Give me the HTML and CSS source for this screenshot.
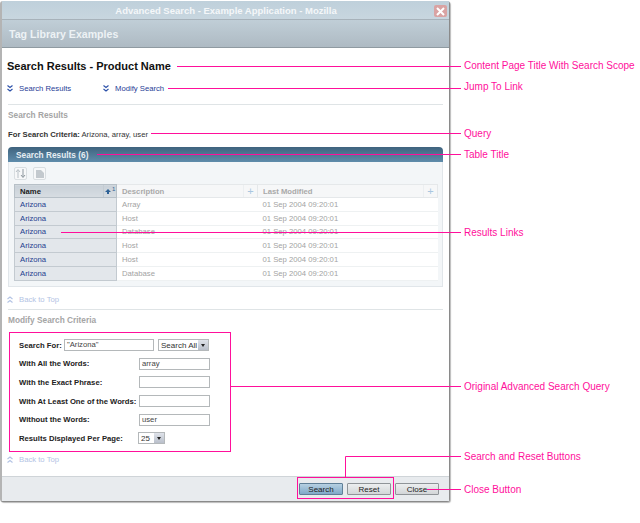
FILE: index.html
```html
<!DOCTYPE html>
<html lang="en">
<head>
  <meta charset="UTF-8" />
  <title>Advanced Search - Example Application - Mozilla</title>
  <link rel="stylesheet" href="styles.css">
</head>
<body>
  <div class="window">
    <div class="titlebar">
      <span class="titlebar-text">Advanced Search - Example Application - Mozilla</span>
      <span class="close-x">
        <svg width="9" height="9" viewBox="0 0 9 9"><path d="M1 1L8 8M8 1L1 8" stroke="#fff" stroke-width="2"/></svg>
      </span>
    </div>
    <div class="masthead">Tag Library Examples</div>

    <div class="content">
      <h1>Search Results - Product Name</h1>

      <div class="jump-links">
        <a class="jump" href="#results">
          <svg class="chev" width="6" height="7" viewBox="0 0 6 7"><path d="M.5 .5L3 2.500L5.500 .5M.5 4L3 6L5.500 4" fill="none" stroke="#2a4fa8" stroke-width="1.100"/></svg>
          Search Results
        </a>
        <a class="jump" href="#modify">
          <svg class="chev" width="6" height="7" viewBox="0 0 6 7"><path d="M.5 .5L3 2.500L5.500 .5M.5 4L3 6L5.500 4" fill="none" stroke="#2a4fa8" stroke-width="1.100"/></svg>
          Modify Search
        </a>
      </div>

      <div class="section-head rule" id="results">Search Results</div>
      <p class="criteria"><strong>For Search Criteria:</strong> Arizona, array, user</p>

      <div class="panel">
        <div class="panel-title">Search Results (6)</div>
        <div class="panel-body">
          <div class="toolbar">
            <span class="tool">
              <svg width="11" height="11" viewBox="0 0 11 11"><path d="M3 10V2M1 4L3 1.500L5 4" fill="none" stroke="#b9c1c7"/><path d="M8 1V9M6 7L8 9.500L10 7" fill="none" stroke="#8d979e"/></svg>
            </span>
            <span class="tool">
              <svg width="10" height="10" viewBox="0 0 10 10"><path d="M1 1H6L9 4V9H1Z" fill="#c3c9ce"/></svg>
            </span>
          </div>
          <table class="results">
            <thead>
              <tr>
                <th class="col-name">
                  <span class="th-inner">Name
                    <span class="sort">
                      <svg width="6" height="5" viewBox="0 0 6 5"><path d="M3 0L6 3H4V5H2V3H0Z" fill="#2f6296"/></svg><sup>1</sup>
                    </span>
                  </span>
                </th>
                <th><span class="th-inner">Description <span class="plus">+</span></span></th>
                <th><span class="th-inner">Last Modified <span class="plus">+</span></span></th>
              </tr>
            </thead>
            <tbody>
              <tr><td class="col-name"><a href="#">Arizona</a></td><td>Array</td><td>01 Sep 2004 09:20:01</td></tr>
              <tr><td class="col-name"><a href="#">Arizona</a></td><td>Host</td><td>01 Sep 2004 09:20:01</td></tr>
              <tr><td class="col-name"><a href="#">Arizona</a></td><td>Database</td><td>01 Sep 2004 09:20:01</td></tr>
              <tr><td class="col-name"><a href="#">Arizona</a></td><td>Host</td><td>01 Sep 2004 09:20:01</td></tr>
              <tr><td class="col-name"><a href="#">Arizona</a></td><td>Host</td><td>01 Sep 2004 09:20:01</td></tr>
              <tr><td class="col-name"><a href="#">Arizona</a></td><td>Database</td><td>01 Sep 2004 09:20:01</td></tr>
            </tbody>
          </table>
        </div>
      </div>

      <a class="back-top" href="#">
        <svg class="chev" width="6" height="7" viewBox="0 0 6 7"><path d="M.5 3L3 1L5.500 3M.5 6.500L3 4.500L5.500 6.500" fill="none" stroke="#b3c3e4" stroke-width="1.100"/></svg>
        Back to Top
      </a>

      <div class="section-head rule modify-head" id="modify">Modify Search Criteria</div>

      <form class="query">
        <div class="query-first">
          <label>Search For:</label>
          <span class="field wide">"Arizona"</span>
          <span class="dropdown scope">Search All<i class="drop-btn"></i></span>
        </div>
        <div class="query-row">
          <label>With All the Words:</label>
          <span class="field">array</span>
        </div>
        <div class="query-row">
          <label>With the Exact Phrase:</label>
          <span class="field"></span>
        </div>
        <div class="query-row">
          <label>With At Least One of the Words:</label>
          <span class="field"></span>
        </div>
        <div class="query-row">
          <label>Without the Words:</label>
          <span class="field">user</span>
        </div>
        <div class="query-row">
          <label>Results Displayed Per Page:</label>
          <span class="dropdown per-page">25<i class="drop-btn"></i></span>
        </div>
      </form>

      <a class="back-top last" href="#">
        <svg class="chev" width="6" height="7" viewBox="0 0 6 7"><path d="M.5 3L3 1L5.500 3M.5 6.500L3 4.500L5.500 6.500" fill="none" stroke="#b3c3e4" stroke-width="1.100"/></svg>
        Back to Top
      </a>
    </div>

    <div class="footer">
      <button class="btn primary" type="button">Search</button>
      <button class="btn" type="button">Reset</button>
      <button class="btn" type="button">Close</button>
    </div>
  </div>

  <svg class="callouts" width="640" height="523" viewBox="0 0 640 523">
    <g fill="none" stroke="#ff0f9b" stroke-width="1">
      <path d="M177 66.500H461"/>
      <path d="M168 88.500H461"/>
      <path d="M151 133.500H461"/>
      <path d="M97 154.500H461"/>
      <path d="M61 232.500H461"/>
      <rect x="9.500" y="332.500" width="221" height="119"/>
      <path d="M231 386.500H461"/>
      <rect x="297.500" y="477.500" width="96" height="21"/>
      <path d="M345.500 477V456.500H461"/>
      <path d="M427 489.500H461"/>
    </g>
  </svg>
  <span class="callout c-title">Content Page Title With Search Scope</span>
  <span class="callout c-jump">Jump To Link</span>
  <span class="callout c-query">Query</span>
  <span class="callout c-table">Table Title</span>
  <span class="callout c-links">Results Links</span>
  <span class="callout c-original">Original Advanced Search Query</span>
  <span class="callout c-buttons">Search and Reset Buttons</span>
  <span class="callout c-close">Close Button</span>
</body>
</html>
```

FILE: styles.css
```css
body {
  margin: 0;
  width: 640px;
  height: 523px;
  overflow: hidden;
  position: relative;
  background: #fff;
  font-family: "Liberation Sans", Arial, sans-serif;
  font-size: 7.700px;
  color: #222;
}
a {
  text-decoration: none;
}
.window {
  margin: 1px 0 0 0;
  width: 450px;
  height: 501px;
  display: flex;
  flex-direction: column;
  border-left: 2px solid #b4b4b4;
  border-right: 1px solid #8a8a8a;
  border-bottom: 1px solid #8a8a8a;
  border-radius: 3px;
  box-shadow: 1px 1px 1px #bbb;
  box-sizing: border-box;
  background: #fff;
}
.titlebar {
  height: 18px;
  flex: none;
  display: flex;
  align-items: center;
  justify-content: center;
  position: relative;
  background: linear-gradient(#bfd0db, #c8d6df);
  border-bottom: 1px solid #a7b2ba;
  color: #f4f7f9;
  font-size: 9.500px;
  font-weight: bold;
}
.titlebar-text {
  margin-left: 1px;
}
.close-x {
  position: absolute;
  right: 2px;
  top: 4px;
  width: 13px;
  height: 12px;
  display: flex;
  align-items: center;
  justify-content: center;
  background: #d9a3a3;
  border-radius: 2px;
}
.masthead {
  height: 27px;
  flex: none;
  display: flex;
  align-items: center;
  padding-left: 7px;
  background: linear-gradient(#c0ced7, #aebac3);
  border-bottom: 1px solid #8f9aa1;
  color: #edf2f5;
  font-size: 10.600px;
  font-weight: bold;
}
.content {
  flex: 1;
  padding: 0 6px;
}
h1 {
  margin: 11px 0 0 -1px;
  font-size: 11px;
  line-height: 14px;
  color: #111;
}
.jump-links {
  display: flex;
  margin: 9px 0 0 -1px;
  height: 12px;
  align-items: center;
}
.jump {
  display: flex;
  align-items: center;
  gap: 6px;
  width: 96px;
  color: #1f3d96;
}
.section-head {
  font-size: 8.300px;
  font-weight: bold;
  color: #a5a5a5;
}
.rule {
  margin-top: 10px;
  padding-top: 4px;
  height: 12px;
  line-height: 12px;
  border-top: 1px solid #dfe4e6;
}
.criteria {
  margin: 8px 0 0;
  height: 12px;
  line-height: 12px;
  color: #333;
}
.panel {
  margin-top: 6px;
}
.panel-title {
  height: 15px;
  line-height: 16px;
  padding-left: 8px;
  border-radius: 4px 4px 0 0;
  background: linear-gradient(#3f637e, #5f8cab);
  color: #e6eef3;
  font-size: 8.300px;
  font-weight: bold;
}
.panel-body {
  background: #f3f6f8;
  border: 1px solid #e1e6ea;
  border-top: 0;
  padding: 5px;
}
.toolbar {
  display: flex;
  gap: 6px;
  height: 13px;
  margin-bottom: 4px;
}
.tool {
  width: 13px;
  height: 13px;
  box-sizing: border-box;
  border: 1px solid #d9dee1;
  border-radius: 2px;
  background: #f7f8f9;
  display: flex;
  align-items: center;
  justify-content: center;
}
.results {
  width: 100%;
  border-collapse: collapse;
  table-layout: fixed;
  background: #fff;
  color: #a3a3a3;
}
.results th,
.results td {
  height: 13.800px;
  padding: 0 5px;
  box-sizing: border-box;
  text-align: left;
  border-bottom: 1px solid #eef1f2;
  white-space: nowrap;
}
.results th {
  height: 13px;
  padding: 0 0 0 5px;
  background: #f6f7f8;
  border: 1px solid #e5e8ea;
  font-weight: bold;
  color: #a9a9a9;
}
.results th:nth-child(2) {
  width: 141px;
}
.results th:nth-child(3) {
  width: 180px;
}
.results th.col-name {
  width: 102px;
  background: linear-gradient(#c9d1d8, #d7dde2);
  border: 1px solid #b7c0c7;
  color: #222;
}
.results td.col-name {
  background: #e3e7eb;
  border: 1px solid #c3cad0;
  border-top: 0;
}
.results td.col-name a {
  color: #24408f;
}
.th-inner {
  display: flex;
  justify-content: space-between;
  align-items: center;
}
.sort {
  display: flex;
  align-items: center;
  width: 13px;
  border-left: 1px solid #c4ccd2;
  height: 12px;
  gap: 1px;
  padding-left: 1px;
  box-sizing: border-box;
}
.sort sup {
  font-size: 6px;
  font-weight: normal;
  color: #2f6296;
  line-height: 6px;
  margin-top: -4px;
}
.plus {
  width: 13px;
  text-align: center;
  border-left: 1px solid #eceff1;
  color: #a9c6e0;
  font-size: 11px;
  line-height: 12px;
  font-weight: normal;
}
.back-top {
  display: flex;
  align-items: center;
  gap: 6px;
  margin: 8px 0 0 -1px;
  height: 10px;
  color: #b3c3e4;
}
.modify-head {
  margin-top: 4px;
}
.query {
  width: 221px;
  height: 119px;
  margin: 7px 0 0 1px;
  box-sizing: border-box;
  padding: 6px 0 0 10px;
  font-weight: bold;
  color: #222;
  display: flex;
  flex-direction: column;
  gap: 5.600px;
}
.query-first,
.query-row {
  display: flex;
  align-items: center;
  height: 13px;
}
.query-row label {
  width: 120px;
  white-space: nowrap;
}
.query-first label {
  width: 45px;
  white-space: nowrap;
}
.field {
  width: 71px;
  height: 12px;
  box-sizing: border-box;
  border: 1px solid #b4b8ba;
  padding-left: 2px;
  line-height: 10px;
  font-weight: normal;
  background: #fff;
  color: #444;
}
.field.wide {
  width: 90px;
}
.dropdown {
  display: flex;
  justify-content: space-between;
  align-items: center;
  height: 12px;
  box-sizing: border-box;
  border: 1px solid #b4b8ba;
  padding-left: 2px;
  font-size: 8px;
  font-weight: normal;
  color: #333;
  white-space: nowrap;
}
.scope {
  width: 51px;
  margin-left: 4px;
}
.per-page {
  width: 27px;
  margin-left: -1px;
}
.drop-btn {
  width: 10px;
  height: 10px;
  background: linear-gradient(#dfe3ea, #b9bfca);
  position: relative;
}
.drop-btn::after {
  content: "";
  position: absolute;
  left: 3px;
  top: 4px;
  border: 2px solid transparent;
  border-top: 3px solid #222;
  border-bottom: 0;
}
.back-top.last {
  margin-top: 3px;
}
.footer {
  height: 24px;
  flex: none;
  display: flex;
  justify-content: flex-end;
  align-items: center;
  gap: 4px;
  padding-right: 10px;
  background: #e8ebee;
  border-top: 1px solid #cfd4d8;
}
.btn {
  width: 44px;
  height: 12px;
  padding: 0;
  border: 1px solid #8f9498;
  border-radius: 1px;
  background: linear-gradient(#eceeef, #d3d6d8);
  font-family: "Liberation Sans", Arial, sans-serif;
  font-size: 8px;
  color: #222;
}
.btn.primary {
  background: linear-gradient(#b6d0e2, #7fa9c8);
  border-color: #5f7f97;
}
.callouts {
  position: absolute;
  left: 0;
  top: 0;
}
.callout {
  position: absolute;
  left: 464px;
  font-size: 10px;
  line-height: 12px;
  color: #ff0f9b;
  white-space: nowrap;
}
.c-title { top: 60px; }
.c-jump { top: 81px; }
.c-query { top: 128px; }
.c-table { top: 149px; }
.c-links { top: 227px; }
.c-original { top: 381px; }
.c-buttons { top: 451px; }
.c-close { top: 484px; }
```
